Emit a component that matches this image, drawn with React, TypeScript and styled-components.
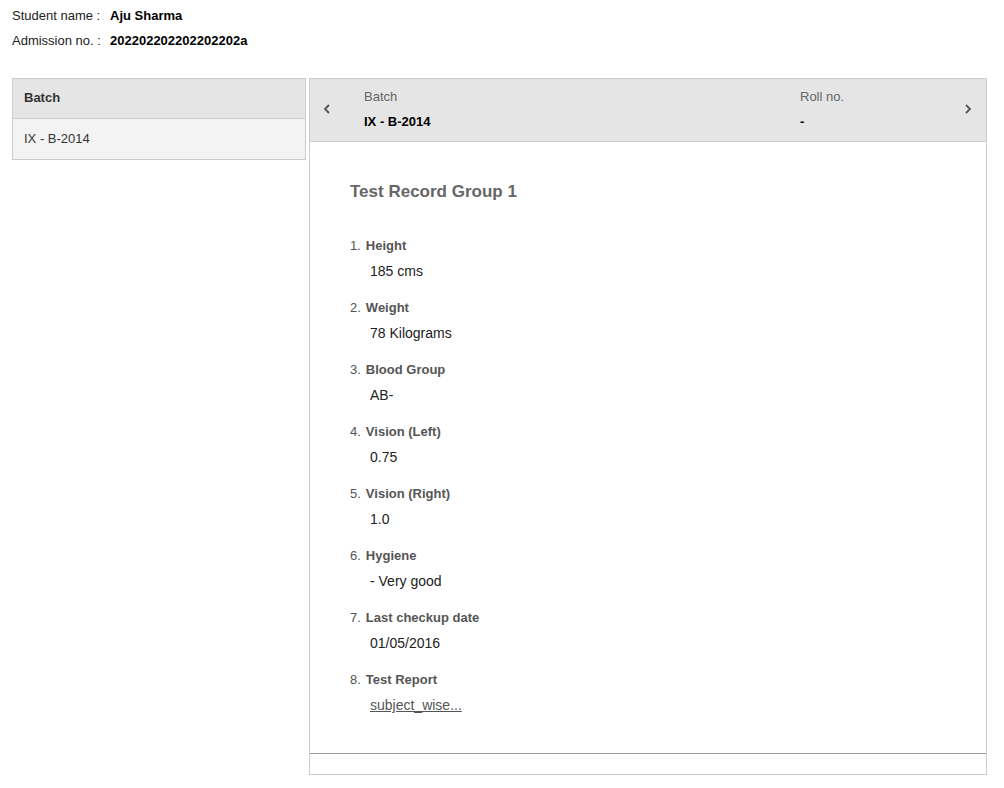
import styled, { createGlobalStyle } from 'styled-components';

const GlobalStyle = createGlobalStyle`
  body {
    margin: 0;
    font-family: "Liberation Sans", Arial, sans-serif;
    background: #fff;
    color: #222;
  }
`;

const records = [
  { label: 'Height', value: '185 cms' },
  { label: 'Weight', value: '78 Kilograms' },
  { label: 'Blood Group', value: 'AB-' },
  { label: 'Vision (Left)', value: '0.75' },
  { label: 'Vision (Right)', value: '1.0' },
  { label: 'Hygiene', value: '- Very good' },
  { label: 'Last checkup date', value: '01/05/2016' },
  { label: 'Test Report', value: 'subject_wise...', link: true },
];

const Chevron = ({ dir }: { dir: 'left' | 'right' }) => (
  <svg width="8" height="12" viewBox="0 0 8 12">
    <path
      d={dir === 'left' ? 'M6 2 L2 6 L6 10' : 'M2 2 L6 6 L2 10'}
      fill="none"
      stroke="#555"
      strokeWidth="1.8"
    />
  </svg>
);

export default function App() {
  return (
    <>
      <GlobalStyle />
      <Info>
        <InfoRow>
          <InfoLabel>Student name :</InfoLabel>
          <InfoValue>Aju Sharma</InfoValue>
        </InfoRow>
        <InfoRow>
          <InfoLabel>Admission no. :</InfoLabel>
          <InfoValue>202202202202202202a</InfoValue>
        </InfoRow>
      </Info>

      <Panels>
        <BatchList>
          <BatchHead>Batch</BatchHead>
          <BatchItem>IX - B-2014</BatchItem>
        </BatchList>

        <Detail>
          <DetailHead>
            <NavButton>
              <Chevron dir="left" />
            </NavButton>
            <HeadCol $width={436}>
              <HeadLabel>Batch</HeadLabel>
              <HeadValue>IX - B-2014</HeadValue>
            </HeadCol>
            <HeadCol $width={171}>
              <HeadLabel>Roll no.</HeadLabel>
              <HeadValue>-</HeadValue>
            </HeadCol>
            <NavButton>
              <Chevron dir="right" />
            </NavButton>
          </DetailHead>

          <DetailBody>
            <GroupTitle>Test Record Group 1</GroupTitle>
            <RecordList>
              {records.map((r, i) => (
                <Record key={r.label}>
                  <RecordLabel>
                    <Num>{i + 1}.</Num>
                    {r.label}
                  </RecordLabel>
                  {r.link ? (
                    <RecordLink href="#">{r.value}</RecordLink>
                  ) : (
                    <RecordValue>{r.value}</RecordValue>
                  )}
                </Record>
              ))}
            </RecordList>
          </DetailBody>
          <DetailFoot />
        </Detail>
      </Panels>
    </>
  );
}

const Info = styled.div`
  padding: 8px 12px 0;
  display: flex;
  flex-direction: column;
  gap: 9px;
  font-size: 13px;
`;

const InfoRow = styled.div`
  display: flex;
  line-height: 16px;
`;

const InfoLabel = styled.span`
  width: 98px;
  color: #222;
`;

const InfoValue = styled.span`
  font-weight: bold;
  color: #000;
`;

const Panels = styled.div`
  display: flex;
  align-items: flex-start;
  gap: 3px;
  margin: 29px 0 0 12px;
`;

const BatchList = styled.div`
  width: 292px;
  border: 1px solid #ccc;
  font-size: 13px;
`;

const BatchHead = styled.div`
  height: 39px;
  line-height: 37px;
  padding-left: 11px;
  background: #e5e5e5;
  border-bottom: 1px solid #ccc;
  font-weight: bold;
  color: #333;
`;

const BatchItem = styled.div`
  height: 40px;
  line-height: 40px;
  padding-left: 11px;
  background: #f3f3f3;
  color: #333;
`;

const Detail = styled.div`
  width: 676px;
  border: 1px solid #ccc;
`;

const DetailHead = styled.div`
  display: flex;
  align-items: center;
  height: 62px;
  background: #e5e5e5;
  border-bottom: 1px solid #ccc;
`;

const NavButton = styled.div`
  flex-shrink: 0;
  width: 34px;
  display: flex;
  justify-content: center;
  padding-bottom: 2px;
  cursor: pointer;
`;

const HeadCol = styled.div<{ $width: number }>`
  flex-shrink: 0;
  box-sizing: border-box;
  width: ${(p) => p.$width}px;
  padding-left: 20px;
  font-size: 13px;
  display: flex;
  flex-direction: column;
  gap: 9px;
  padding-bottom: 2px;
`;

const HeadLabel = styled.div`
  color: #666;
  line-height: 16px;
`;

const HeadValue = styled.div`
  color: #000;
  font-weight: bold;
  line-height: 16px;
`;

const DetailBody = styled.div`
  padding: 40px 40px 21px;
  border-bottom: 1px solid #999;
`;

const GroupTitle = styled.h2`
  margin: 0 0 34px;
  font-size: 17px;
  line-height: 20px;
  font-weight: bold;
  color: #666;
`;

const RecordList = styled.ol`
  list-style: none;
  margin: 0;
  padding: 0;
`;

const Record = styled.li`
  margin-bottom: 17px;
`;

const RecordLabel = styled.div`
  font-size: 13px;
  line-height: 20px;
  font-weight: bold;
  color: #555;
`;

const Num = styled.span`
  font-weight: normal;
  margin-right: 5px;
`;

const RecordValue = styled.div`
  margin-top: 5px;
  padding-left: 20px;
  font-size: 14px;
  line-height: 20px;
  color: #222;
`;

const RecordLink = styled.a`
  display: block;
  margin-top: 5px;
  margin-left: 20px;
  font-size: 14px;
  line-height: 20px;
  color: #555;
  text-decoration: underline;
`;

const DetailFoot = styled.div`
  height: 20px;
`;
